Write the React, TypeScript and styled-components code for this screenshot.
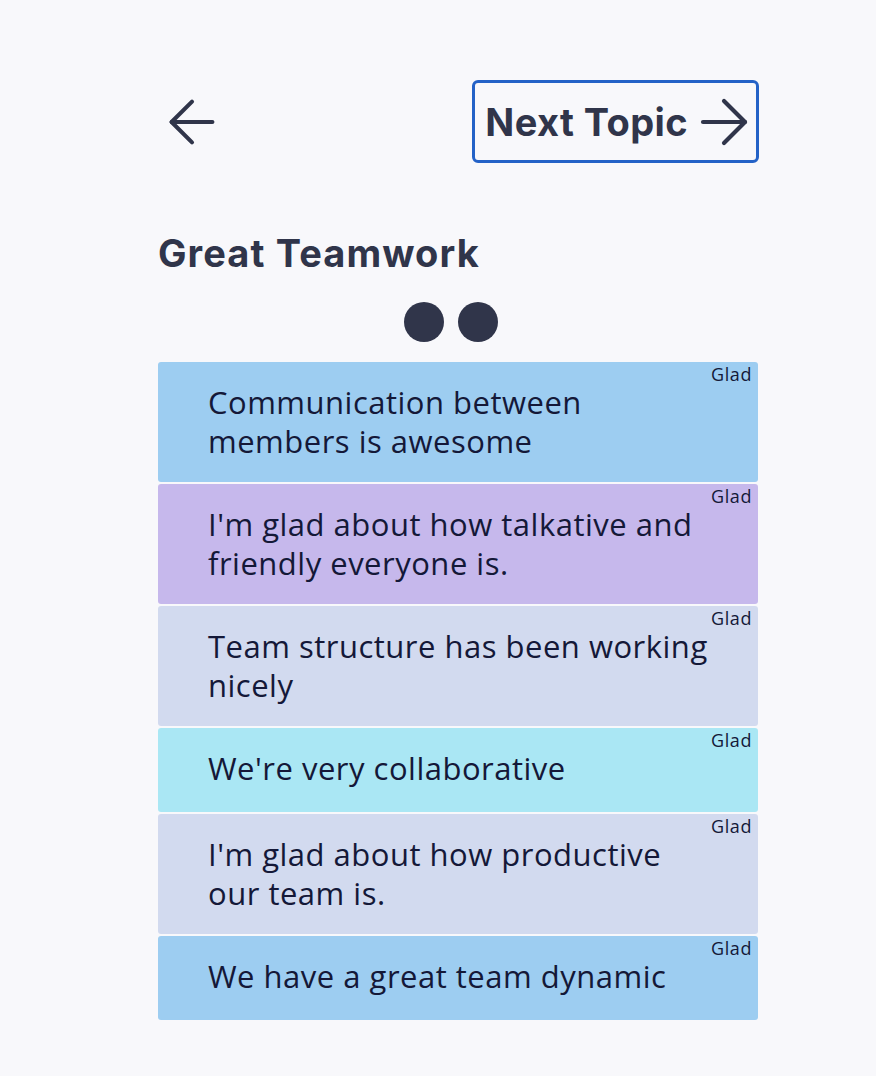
import React, { FC } from "react";
import styled, { createGlobalStyle } from "styled-components";
import { ArrowLeft, ArrowRight } from "lucide-react";

const GlobalStyle = createGlobalStyle`
  html, body {
    margin: 0;
    padding: 0;
    background: #f8f8fb;
  }
  body {
    font-family: "Open Sans", "Noto Sans", sans-serif;
  }
`;

const Page = styled.div`
  width: 600px;
  margin: 0 0 0 158px;
  padding: 80px 0 40px;
  display: flex;
  flex-direction: column;
`;

const TopBar = styled.div`
  display: flex;
  align-items: center;
  justify-content: space-between;
  height: 83px;
`;

const BackButton = styled.button`
  display: flex;
  align-items: center;
  background: none;
  border: 0;
  padding: 0;
  margin-left: -1px;
  color: #30354a;
  cursor: pointer;
`;

const NextButton = styled.button`
  display: flex;
  align-items: center;
  height: 83px;
  box-sizing: border-box;
  padding: 0 0 0 10px;
  margin-right: -1px;
  background: transparent;
  border: 3px solid #2462c7;
  border-radius: 6px;
  color: #30354a;
  font-family: Inter, "Liberation Sans", sans-serif;
  font-weight: 700;
  font-size: 38px;
  letter-spacing: 0.4px;
  cursor: pointer;

  svg {
    margin-right: -4px;
  }
`;

const Title = styled.h2`
  margin: 70px 0 0;
  font-family: Inter, "Liberation Sans", sans-serif;
  font-weight: 700;
  font-size: 38px;
  line-height: 40px;
  letter-spacing: 1.1px;
  color: #30354a;
`;

const Dots = styled.div`
  display: flex;
  justify-content: center;
  gap: 14px;
  margin: 29px 14px 20px 0;
`;

const Dot = styled.span`
  width: 40px;
  height: 40px;
  border-radius: 50%;
  background: #30354a;
`;

const CardList = styled.div`
  display: flex;
  flex-direction: column;
  gap: 2px;
`;

const Card = styled.div<{ bg: string }>`
  position: relative;
  box-sizing: border-box;
  min-height: 84px;
  background: ${({ bg }) => bg};
  border-radius: 3px;
  padding: 21px 44px 21px 50px;
  font-size: 31px;
  line-height: 39px;
  letter-spacing: 0.5px;
  color: #141838;
`;

const Tag = styled.span`
  position: absolute;
  top: 2px;
  right: 6px;
  font-size: 18px;
  line-height: 20px;
  letter-spacing: 0.6px;
  color: #141838;
`;

type Item = { text: string; bg: string };

const items: Item[] = [
  { text: "Communication between members is awesome", bg: "#9dcdf1" },
  { text: "I'm glad about how talkative and friendly everyone is.", bg: "#c6b8ec" },
  { text: "Team structure has been working nicely", bg: "#d2daef" },
  { text: "We're very collaborative", bg: "#aae7f4" },
  { text: "I'm glad about how productive our team is.", bg: "#d2daef" },
  { text: "We have a great team dynamic", bg: "#9dcdf1" },
];

const App: FC = () => (
  <>
    <GlobalStyle />
    <Page>
      <TopBar>
        <BackButton aria-label="Back">
          <ArrowLeft size={70} strokeWidth={1.4} />
        </BackButton>
        <NextButton>
          Next Topic
          <ArrowRight size={72} strokeWidth={1.4} />
        </NextButton>
      </TopBar>
      <Title>Great Teamwork</Title>
      <Dots>
        <Dot />
        <Dot />
      </Dots>
      <CardList>
        {items.map((item) => (
          <Card key={item.text} bg={item.bg}>
            <Tag>Glad</Tag>
            {item.text}
          </Card>
        ))}
      </CardList>
    </Page>
  </>
);

export default App;
